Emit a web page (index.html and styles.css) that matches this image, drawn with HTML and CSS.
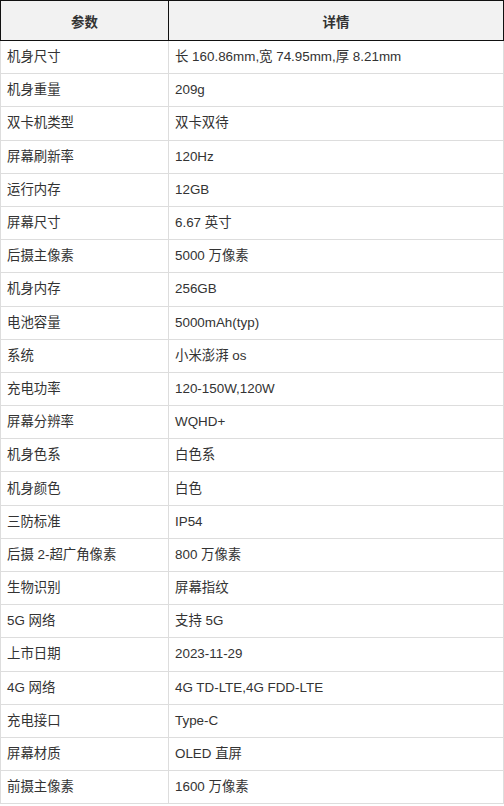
FILE: index.html
```html
<!DOCTYPE html>
<html lang="zh">
<head>
<meta charset="utf-8">
<link rel="stylesheet" href="styles.css">
</head>
<body>
<table class="spec">
<thead>
<tr><th class="c1">参数</th><th class="c2">详情</th></tr>
</thead>
<tbody>
<tr><td>机身尺寸</td><td>长 160.86mm,宽 74.95mm,厚 8.21mm</td></tr>
<tr><td>机身重量</td><td>209g</td></tr>
<tr><td>双卡机类型</td><td>双卡双待</td></tr>
<tr><td>屏幕刷新率</td><td>120Hz</td></tr>
<tr><td>运行内存</td><td>12GB</td></tr>
<tr><td>屏幕尺寸</td><td>6.67 英寸</td></tr>
<tr><td>后摄主像素</td><td>5000 万像素</td></tr>
<tr><td>机身内存</td><td>256GB</td></tr>
<tr><td>电池容量</td><td>5000mAh(typ)</td></tr>
<tr><td>系统</td><td>小米澎湃 os</td></tr>
<tr><td>充电功率</td><td>120-150W,120W</td></tr>
<tr><td>屏幕分辨率</td><td>WQHD+</td></tr>
<tr><td>机身色系</td><td>白色系</td></tr>
<tr><td>机身颜色</td><td>白色</td></tr>
<tr><td>三防标准</td><td>IP54</td></tr>
<tr><td>后摄 2-超广角像素</td><td>800 万像素</td></tr>
<tr><td>生物识别</td><td>屏幕指纹</td></tr>
<tr><td>5G 网络</td><td>支持 5G</td></tr>
<tr><td>上市日期</td><td>2023-11-29</td></tr>
<tr><td>4G 网络</td><td>4G TD-LTE,4G FDD-LTE</td></tr>
<tr><td>充电接口</td><td>Type-C</td></tr>
<tr><td>屏幕材质</td><td>OLED 直屏</td></tr>
<tr><td>前摄主像素</td><td>1600 万像素</td></tr>
</tbody>
</table>
</body>
</html>
```
FILE: styles.css
```css
html, body {
  margin: 0;
  padding: 0;
  background: #ffffff;
}
body {
  font-family: "Liberation Sans", "Noto Sans CJK SC", sans-serif;
  font-size: 13.4px;
  color: #333333;
}
.spec {
  width: 504px;
  border-collapse: collapse;
  table-layout: fixed;
}
.spec th {
  height: 39px;
  padding: 0;
  background: #f2f2f2;
  border: 1px solid #111111;
  font-weight: bold;
  text-align: center;
  color: #333333;
}
.spec .c1 { width: 167px; }
.spec td {
  height: 32.2px;
  padding: 0 0 0 6px;
  border: 1px solid #dddddd;
  text-align: left;
  vertical-align: middle;
  line-height: 16px;
}
.spec tbody tr:first-child td {
  border-top: none;
}
```
